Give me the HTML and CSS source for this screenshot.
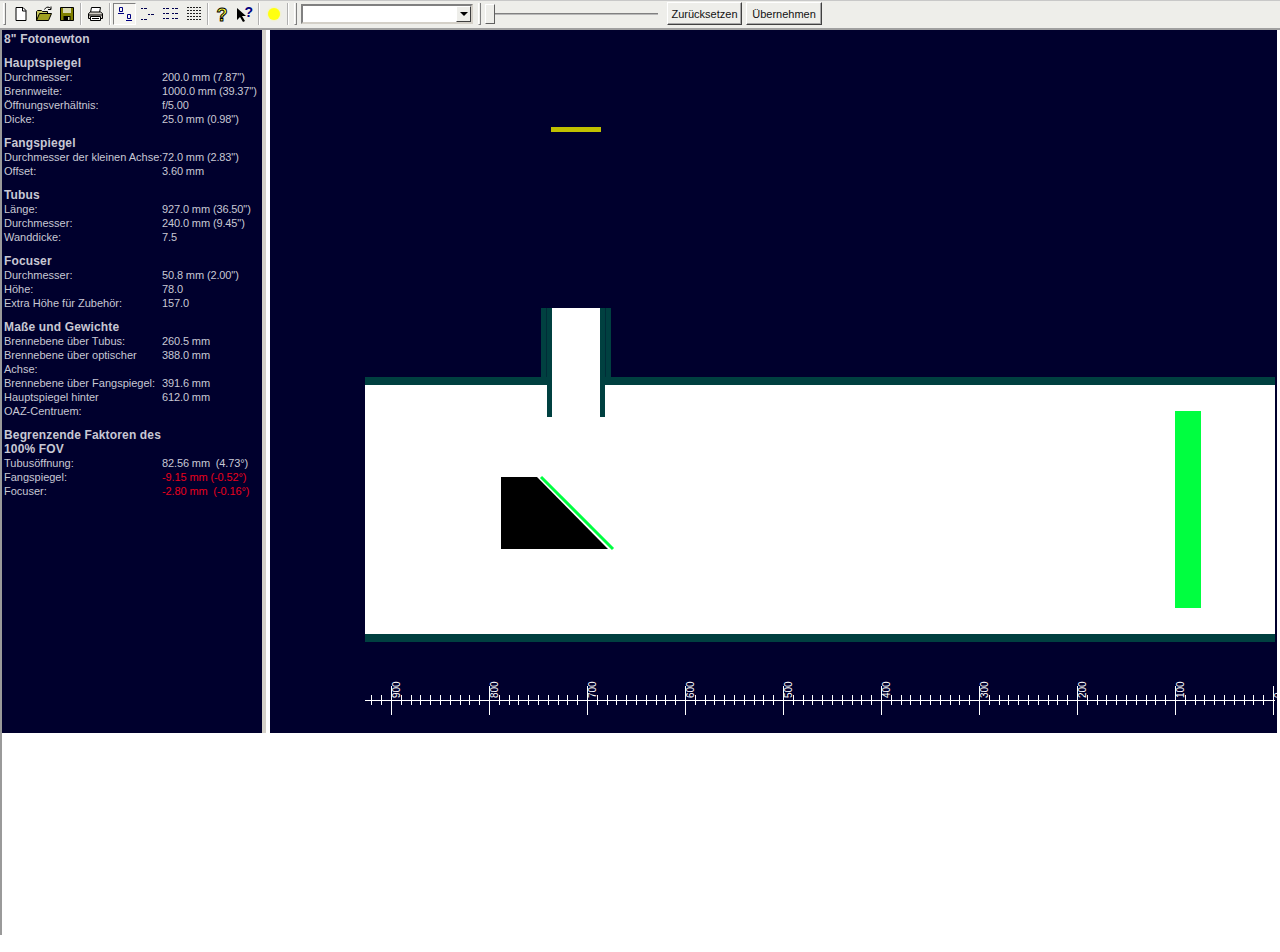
FILE: index.html
```html
<!DOCTYPE html>
<html lang="de">
<head>
    <meta charset="UTF-8">
    <title>Newton Designer</title>
    <link rel="stylesheet" href="styles.css">
</head>
<body>
    <div class="toolbar">
        <span class="grip"></span>
        <button class="tool" title="Neu">
            <svg width="16" height="16" viewBox="0 0 16 16"><path d="M3 1.500h7l3 3v10H3z" fill="#fff" stroke="#000"/><path d="M9.500 1.500v3.500h3.500" fill="none" stroke="#000"/></svg>
        </button>
        <button class="tool" title="Öffnen">
            <svg width="18" height="16" viewBox="0 0 18 16"><path d="M1.500 14.500v-9l1-1h4l1 1h5v2" fill="#c8c860" stroke="#000"/><path d="M1.500 14.500l3-7h12l-3 7z" fill="#a0a020" stroke="#000"/><path d="M9.500 3.500c1-2 3-3 5-2l1 1M16 .5v3h-3" fill="none" stroke="#000"/></svg>
        </button>
        <button class="tool" title="Speichern">
            <svg width="16" height="16" viewBox="0 0 16 16"><path d="M1.500 1.500h13v13h-13z" fill="#808000" stroke="#000"/><path d="M4 2h8v5H4z" fill="#d8d8b0"/><path d="M4.500 10h7v4.500h-7z" fill="#000"/><path d="M9 11h1.500v3H9z" fill="#d8d8b0"/></svg>
        </button>
        <span class="sep"></span>
        <button class="tool" title="Drucken">
            <svg width="17" height="16" viewBox="0 0 17 16"><path d="M4.500 1.500h9l-1 5h-9z" fill="#fff" stroke="#000"/><path d="M1.500 7.500l2-1.500h10l2 1.500v5h-14z" fill="#d4d0c8" stroke="#000"/><path d="M3.500 10.500h10v4h-10z" fill="#fff" stroke="#000"/><path d="M2 9h13M5 12.500h7" stroke="#000"/></svg>
        </button>
        <span class="sep"></span>
        <button class="tool pressed" title="Große Symbole">
            <svg width="16" height="16" viewBox="0 0 16 16" fill="none" stroke="#000080"><path d="M2.500 1.500h3v4h-3zM10.500 8.500h3v4h-3z"/><path d="M1 7.500h6M9 14.500h6"/></svg>
        </button>
        <button class="tool" title="Kleine Symbole">
            <svg width="16" height="16" viewBox="0 0 16 16" fill="none" stroke="#000050"><path d="M1 2.500h2M4 2.500h3M8 8.500h2M11 8.500h3M1 13.500h2M4 13.500h3"/></svg>
        </button>
        <button class="tool" title="Liste">
            <svg width="16" height="16" viewBox="0 0 16 16" fill="none" stroke="#000050"><path d="M0 2.500h2M3 2.500h3M9 2.500h2M12 2.500h3M0 7.500h2M3 7.500h3M9 7.500h2M12 7.500h3M0 12.500h2M3 12.500h3M9 12.500h2M12 12.500h3"/></svg>
        </button>
        <button class="tool" title="Details">
            <svg width="16" height="16" viewBox="0 0 16 16" fill="none" stroke="#202020"><path d="M1 1.500h15M1 4.500h15M1 7.500h15M1 10.500h15M1 13.500h15" stroke-dasharray="2 1"/></svg>
        </button>
        <span class="sep sep-narrow"></span>
        <button class="tool" title="Hilfe">
            <svg width="16" height="18" viewBox="0 0 16 18"><text class="help-glyph" x="8" y="15.500" text-anchor="middle">?</text></svg>
        </button>
        <button class="tool" title="Direkthilfe">
            <svg width="18" height="18" viewBox="0 0 18 18"><path d="M1 3v12l3-3 3 5 2-1-3-5h4z" fill="#000"/><text class="context-glyph" x="8.500" y="12">?</text></svg>
        </button>
        <span class="sep"></span>
        <button class="tool" title="Licht">
            <span class="lamp"></span>
        </button>
        <span class="sep sep-last"></span>
        <span class="grip"></span>
        <div class="combo">
            <span class="combo-arrow"></span>
        </div>
        <span class="grip grip-slider"></span>
        <div class="slider">
            <span class="slider-thumb"></span>
            <span class="slider-track"></span>
        </div>
        <button class="btn btn-reset">Zurücksetzen</button>
        <button class="btn">Übernehmen</button>
    </div>

    <div class="client">
        <div class="workspace">
            <div class="info">
                <h1>8" Fotonewton</h1>

                <section>
                    <h2>Hauptspiegel</h2>
                    <div class="row"><span>Durchmesser:</span><span>200.0 mm (7.87")</span></div>
                    <div class="row"><span>Brennweite:</span><span>1000.0 mm (39.37")</span></div>
                    <div class="row"><span>Öffnungsverhältnis:</span><span>f/5.00</span></div>
                    <div class="row"><span>Dicke:</span><span>25.0 mm (0.98")</span></div>
                </section>

                <section>
                    <h2>Fangspiegel</h2>
                    <div class="row"><span class="nowrap">Durchmesser der kleinen Achse:</span><span>72.0 mm (2.83")</span></div>
                    <div class="row"><span>Offset:</span><span>3.60 mm</span></div>
                </section>

                <section>
                    <h2>Tubus</h2>
                    <div class="row"><span>Länge:</span><span>927.0 mm (36.50")</span></div>
                    <div class="row"><span>Durchmesser:</span><span>240.0 mm (9.45")</span></div>
                    <div class="row"><span>Wanddicke:</span><span>7.5</span></div>
                </section>

                <section>
                    <h2>Focuser</h2>
                    <div class="row"><span>Durchmesser:</span><span>50.8 mm (2.00")</span></div>
                    <div class="row"><span>Höhe:</span><span>78.0</span></div>
                    <div class="row"><span>Extra Höhe für Zubehör:</span><span>157.0</span></div>
                </section>

                <section>
                    <h2>Maße und Gewichte</h2>
                    <div class="row"><span>Brennebene über Tubus:</span><span>260.5 mm</span></div>
                    <div class="row"><span>Brennebene über optischer Achse:</span><span>388.0 mm</span></div>
                    <div class="row"><span>Brennebene über Fangspiegel:</span><span>391.6 mm</span></div>
                    <div class="row"><span>Hauptspiegel hinter<br>OAZ-Centruem:</span><span>612.0 mm</span></div>
                </section>

                <section>
                    <h2>Begrenzende Faktoren des 100% FOV</h2>
                    <div class="row"><span>Tubusöffnung:</span><span>82.56 mm&nbsp; (4.73°)</span></div>
                    <div class="row"><span>Fangspiegel:</span><span class="bad">-9.15 mm (-0.52°)</span></div>
                    <div class="row"><span>Focuser:</span><span class="bad">-2.80 mm&nbsp; (-0.16°)</span></div>
                </section>
            </div>

            <div class="splitter"></div>

            <!-- viewBox uses page coordinates -->
            <svg class="canvas" width="1007" height="703" viewBox="270 30 1007 703">
                <rect class="focal" x="551" y="127" width="50" height="5"/>

                <rect class="air" x="365" y="385" width="910" height="249"/>
                <rect class="air" x="552" y="308" width="48" height="77"/>

                <rect class="wall" x="365" y="377" width="182" height="8"/>
                <rect class="wall" x="605" y="377" width="670" height="8"/>
                <rect class="wall" x="365" y="634" width="910" height="8"/>
                <rect class="wall" x="541" y="308" width="6" height="77"/>
                <rect class="wall" x="605" y="308" width="6" height="77"/>
                <rect class="wall-dark" x="546" y="308" width="1" height="69"/>
                <rect class="wall-dark" x="605" y="308" width="1" height="69"/>
                <rect class="wall" x="547" y="308" width="5" height="109"/>
                <rect class="wall" x="600" y="308" width="5" height="109"/>

                <polygon points="501,477 537,477 608,549 501,549" fill="#000"/>
                <line class="mirror" x1="541" y1="477" x2="613" y2="549"/>
                <rect class="primary" x="1175" y="411" width="26" height="197"/>

                <line class="tick" x1="365" y1="700" x2="1275" y2="700"/>
                <line class="tick minor" x1="371.400" y1="700" x2="1275" y2="700"/>
                <line class="tick major" x1="391" y1="700" x2="1275" y2="700"/>

                <text class="scale" transform="translate(400 698) rotate(-90)">900</text>
                <text class="scale" transform="translate(498 698) rotate(-90)">800</text>
                <text class="scale" transform="translate(596 698) rotate(-90)">700</text>
                <text class="scale" transform="translate(694 698) rotate(-90)">600</text>
                <text class="scale" transform="translate(792 698) rotate(-90)">500</text>
                <text class="scale" transform="translate(890 698) rotate(-90)">400</text>
                <text class="scale" transform="translate(988 698) rotate(-90)">300</text>
                <text class="scale" transform="translate(1086 698) rotate(-90)">200</text>
                <text class="scale" transform="translate(1184 698) rotate(-90)">100</text>
                <text class="scale" transform="translate(1282 698) rotate(-90)">0</text>
            </svg>
        </div>
    </div>
</body>
</html>
```

FILE: styles.css
```css
:root {
    --face: #eeeeea;
    --shade: #808080;
    --navy: #00002d;
    --wall: #004040;
    --green: #00ff40;
    --text: #c8c8d4;
}

* {
    box-sizing: border-box;
}

body {
    margin: 0;
    background: #fff;
    font-family: "Liberation Sans", Arial, sans-serif;
    font-size: 11px;
}

.toolbar {
    display: flex;
    align-items: center;
    height: 30px;
    padding: 0 0 2px 3px;
    background: var(--face);
    border-top: 1px solid #c8c8c8;
    border-bottom: 2px solid #a0a0a0;
}

.grip {
    width: 3px;
    height: 22px;
    margin-right: 3px;
    border-left: 1px solid #fff;
    border-right: 1px solid var(--shade);
    border-bottom: 1px solid var(--shade);
    background: var(--face);
}

.tool {
    display: flex;
    align-items: center;
    justify-content: center;
    width: 23px;
    height: 22px;
    padding: 0;
    background: none;
    border: 1px solid transparent;
}

.pressed {
    background: #f6f5f1;
    border-color: var(--shade) #fff #fff var(--shade);
}

.sep {
    width: 2px;
    height: 22px;
    margin: 0 2px;
    border-left: 1px solid #b0b0b0;
    border-right: 1px solid #fff;
}

.sep-narrow {
    margin-right: 1px;
}

.sep-last {
    margin-right: 5px;
}

.help-glyph {
    font: bold 18px "Liberation Sans", sans-serif;
    fill: #ffff40;
    stroke: #000;
    stroke-width: 1;
}

.context-glyph {
    font: bold 14px "Liberation Sans", sans-serif;
    fill: #000080;
}

.lamp {
    width: 12px;
    height: 12px;
    border-radius: 50%;
    background: #ffff10;
    box-shadow: 0 0 2px #ffff60;
}

.combo {
    position: relative;
    width: 172px;
    height: 20px;
    margin-left: 1px;
    background: #fff;
    border: 2px solid;
    border-color: var(--shade) #d4d0c8 #d4d0c8 var(--shade);
}

.combo-arrow {
    position: absolute;
    top: 0;
    right: 0;
    width: 15px;
    height: 16px;
    background: var(--face);
    border: 1px solid;
    border-color: #fff #404040 #404040 #fff;
}

.combo-arrow::after {
    content: "";
    position: absolute;
    top: 5px;
    left: 3px;
    border: 4px solid transparent;
    border-top: 4px solid #000;
    border-bottom: 0;
}

.grip-slider {
    margin: 0 4px 0 5px;
}

.slider {
    display: flex;
    align-items: center;
    width: 173px;
    height: 22px;
}

.slider-thumb {
    width: 10px;
    height: 20px;
    background: var(--face);
    border: 1px solid;
    border-color: #fff #606060 #606060 #fff;
}

.slider-track {
    flex: 1;
    height: 2px;
    background: #808080;
    border-bottom: 1px solid #b8b8b8;
}

.btn {
    width: 76px;
    height: 23px;
    padding: 0;
    background: var(--face);
    border: 1px solid;
    border-color: #fff #404040 #404040 #fff;
    box-shadow: inset -1px -1px 0 #a8a8a8;
    color: #111;
    font: 11px "Liberation Sans", Arial, sans-serif;
}

.btn-reset {
    width: 75px;
    margin: 0 4px 0 9px;
}

.client {
    height: 905px;
    border-left: 2px solid #9a9a9a;
}

.workspace {
    display: flex;
    height: 703px;
}

.info {
    width: 260px;
    padding: 2px;
    background: var(--navy);
    color: var(--text);
    line-height: 14px;
}

.info h1,
.info h2 {
    margin: 0;
    font-size: 12px;
    font-weight: bold;
    letter-spacing: .15px;
}

.info section {
    margin-top: 10px;
}

.info h2 {
    width: 165px;
}

.row {
    display: grid;
    grid-template-columns: 158px 1fr;
}

.row span + span {
    letter-spacing: -.12px;
}

.nowrap {
    white-space: nowrap;
}

.bad {
    color: #e8001c;
}

.splitter {
    width: 6px;
    background: #d4d0c8;
    border-right: 2px solid #fff;
}

.canvas {
    display: block;
    margin-left: 2px;
    background: var(--navy);
}

.focal {
    fill: #c0c000;
}

.air {
    fill: #fff;
}

.wall {
    fill: var(--wall);
}

.wall-dark {
    fill: #002c38;
}

.mirror {
    stroke: var(--green);
    stroke-width: 3;
}

.primary {
    fill: var(--green);
}

.tick {
    stroke: #fff;
    stroke-width: 1;
    shape-rendering: crispEdges;
}

.minor {
    stroke-width: 10;
    stroke-dasharray: 1 8.800;
}

.major {
    stroke-width: 29;
    stroke-dasharray: 1 97;
}

.scale {
    font: 10px "Liberation Sans", Arial, sans-serif;
    fill: #fff;
}
```
